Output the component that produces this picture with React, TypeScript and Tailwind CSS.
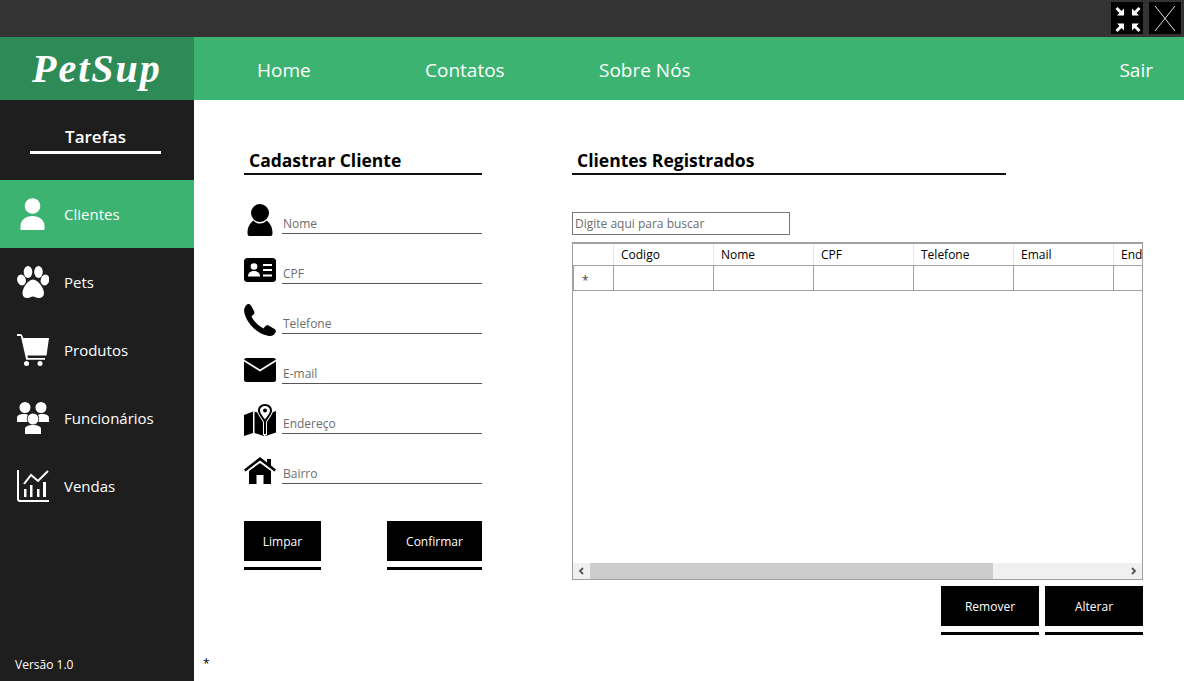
import React from 'react';

const font = { fontFamily: '"Open Sans", "Noto Sans", sans-serif' };

type IconProps = { className?: string };

const UserWhite = ({ className }: IconProps) => (
  <svg viewBox="0 0 32 32" className={className} fill="currentColor">
    <circle cx="15.5" cy="8" r="7.8" />
    <path d="M3.5 32V28C3.5 22 9 18 15.5 18S27.5 22 27.5 28V32Z" />
  </svg>
);

const PawIcon = ({ className }: IconProps) => (
  <svg viewBox="0 0 32 32" className={className} fill="currentColor">
    <ellipse cx="4.500" cy="14" rx="4.300" ry="5.500" transform="rotate(-15 4.500 14)" />
    <ellipse cx="11" cy="6" rx="4.300" ry="6" />
    <ellipse cx="21.500" cy="6" rx="4.300" ry="6" />
    <ellipse cx="28" cy="14" rx="4.300" ry="5.500" transform="rotate(15 28 14)" />
    <path d="M16 13.500C21 13.500 27 22 27 27C27 31 24 32 21.500 32C19 32 18 30.500 16 30.500C14 30.500 13 32 10.500 32C8 32 5.500 31 5.500 27C5.500 22 11 13.500 16 13.500Z" />
  </svg>
);

const CartIcon = ({ className }: IconProps) => (
  <svg viewBox="0 0 32 32" className={className} fill="currentColor">
    <path d="M0 0H3C4.500 0 5.400 1 5.700 2.400L6.200 4H32L29.500 21.500H10.500L10.800 24H28V25.800H9.200L3.800 2H0Z" />
    <circle cx="9.500" cy="29.500" r="2.500" />
    <circle cx="23" cy="29.500" r="2.500" />
  </svg>
);

const UsersIcon = ({ className }: IconProps) => (
  <svg viewBox="0 0 32 32" className={className} fill="currentColor">
    <circle cx="8" cy="5.500" r="5.500" />
    <circle cx="24" cy="5.500" r="5.500" />
    <circle cx="16" cy="17" r="5.500" />
    <path d="M0 20V16C0 13 3 12 7 12 9 12 10.500 12.500 11 13 9.500 15 9.500 18 10.500 20Z" />
    <path d="M32 20V16C32 13 29 12 25 12 23 12 21.500 12.500 21 13 22.500 15 22.500 18 21.500 20Z" />
    <path d="M8 32V27C8 24 12 23 16 23S24 24 24 27V32Z" />
  </svg>
);

const ChartIcon = ({ className }: IconProps) => (
  <svg viewBox="0 0 32 32" className={className}>
    <path d="M1 0V29C1 30.200 1.800 31 3 31H32" fill="none" stroke="currentColor" strokeWidth="2" />
    <path d="M7 14L14 5L21 11L31 1" fill="none" stroke="currentColor" strokeWidth="2" />
    <path d="M7 19H9.500V27H7ZM13 15H15.500V27H13ZM20 19H22.500V27H20ZM26 12H29V27H26Z" fill="currentColor" />
  </svg>
);

const UserBlack = ({ className }: IconProps) => (
  <svg viewBox="0 0 32 32" className={className} fill="currentColor">
    <circle cx="16" cy="9" r="9" />
    <path d="M3.500 29C3.500 23 6 19 9.500 16.500C12 20.500 20 20.500 22.500 16.500C26 19 28.500 23 28.500 29Q28.500 32 26.500 32H5.500Q3.500 32 3.500 29Z" />
  </svg>
);

const IdCardIcon = ({ className }: IconProps) => (
  <svg viewBox="0 0 32 24" className={className}>
    <rect width="32" height="24" rx="3.500" fill="#000" />
    <circle cx="10" cy="8.500" r="3.300" fill="#fff" />
    <path d="M4 18.500C4 14.500 7 13 10 13S16 14.500 16 18.500Z" fill="#fff" />
    <path d="M19 6H28V8H19ZM19 11H28V13H19ZM19 16.500H28V18.500H19Z" fill="#fff" />
  </svg>
);

const PhoneIcon = ({ className }: IconProps) => (
  <svg viewBox="0 0 32 32" className={className} fill="currentColor">
    <path d="M3 .5C4.500-.5 6 0 6.800 1.300L10 7C10.800 8.500 10.500 9.800 9.300 10.800L7.500 12.300C9.500 17 14 21.800 19.500 24.500L21 22.500C22 21.300 23.500 21 25 21.800L30.500 25C32 25.900 32.300 27.500 31.300 29C29.500 31.500 27 32.500 24 31.800C13 29.500 3.500 20 .5 9.500C-.5 5.500 .5 2.500 3 .5Z" />
  </svg>
);

const MailIcon = ({ className }: IconProps) => (
  <svg viewBox="0 0 32 24" className={className}>
    <rect width="32" height="24" rx="2.500" fill="#000" />
    <path d="M0 2.500L16 12.500L32 2.500" fill="none" stroke="#fff" strokeWidth="1.600" />
  </svg>
);

const MapIcon = ({ className }: IconProps) => (
  <svg viewBox="0 0 32 32" className={className}>
    <path d="M0 11L9 7.500V29L0 32ZM10.500 7.500L20 11V32L10.500 29ZM21.500 11L32 7V28.500L21.500 32Z" fill="#000" />
    <path d="M21 0C16.500 0 14 3.200 14 6.500C14 10 18 14 20 18V30H22V18C24 14 28 10 28 6.500C28 3.200 25.500 0 21 0Z" fill="#fff" stroke="#fff" strokeWidth="2" />
    <path fillRule="evenodd" d="M21 0C16.500 0 14 3.200 14 6.500C14 10 18 14 20 18V30H22V18C24 14 28 10 28 6.500C28 3.200 25.500 0 21 0ZM21 2C24 2 26 4.200 26 6.500C26 9 23 12.500 21 15.500C19 12.500 16 9 16 6.500C16 4.200 18 2 21 2Z" fill="#000" />
    <circle cx="21" cy="6.500" r="2" fill="#000" />
  </svg>
);

const HomeIcon = ({ className }: IconProps) => (
  <svg viewBox="0 0 32 27" className={className} fill="currentColor">
    <path d="M16 0L23 5.500V2H27V8.500L32 12.500L30.500 14.500L16 3.500L1.500 14.500L0 12.500Z" />
    <path d="M5 14L16 6L27 14V27H19.500V18H12.500V27H5Z" />
  </svg>
);

const CompressArrow = ({ sx, sy }: { sx: number; sy: number }) => (
  <g transform={`translate(17 17.500) scale(${sx} ${sy})`}>
    <path d="M-4 -4V-11L-11 -4Z" fill="#fff" />
    <path d="M-11.500 -11.500L-6 -6" stroke="#fff" strokeWidth="3" />
  </g>
);

const CompressIcon = ({ className }: IconProps) => (
  <svg viewBox="0 0 32 32" className={className}>
    <CompressArrow sx={1} sy={1} />
    <CompressArrow sx={-1} sy={1} />
    <CompressArrow sx={1} sy={-1} />
    <CompressArrow sx={-1} sy={-1} />
  </svg>
);

const sideItems = [
  { label: 'Clientes', icon: <UserWhite className="w-8 h-8" />, active: true },
  { label: 'Pets', icon: <PawIcon className="w-8 h-8" />, active: false },
  { label: 'Produtos', icon: <CartIcon className="w-8 h-8" />, active: false },
  { label: 'Funcionários', icon: <UsersIcon className="w-8 h-8" />, active: false },
  { label: 'Vendas', icon: <ChartIcon className="w-8 h-8" />, active: false },
];

const fields = [
  { label: 'Nome', icon: <UserBlack className="w-8 h-8 mb-[-2px]" /> },
  { label: 'CPF', icon: <IdCardIcon className="w-8 h-6 mb-[2px]" /> },
  { label: 'Telefone', icon: <PhoneIcon className="w-8 h-8 mb-[-2px]" /> },
  { label: 'E-mail', icon: <MailIcon className="w-8 h-6 mb-[2px]" /> },
  { label: 'Endereço', icon: <MapIcon className="w-8 h-8 mb-[-2px]" /> },
  { label: 'Bairro', icon: <HomeIcon className="w-8 h-[27px]" /> },
];

// ultima coluna aparece cortada no grid
const columns = ['Codigo', 'Nome', 'CPF', 'Telefone', 'Email', 'End'];

const ActionButton = ({ label, className }: { label: string; className: string }) => (
  <div className={className}>
    <button className="w-full h-10 bg-black text-white text-[12px] pt-px">{label}</button>
    <div className="h-[3px] bg-black mt-[6px]" />
  </div>
);

export default function App() {
  return (
    <div className="w-[1184px] h-[681px] overflow-hidden flex flex-col bg-white" style={font}>
      <div className="h-[37px] bg-[#333333] flex justify-end items-start pt-[2px] pr-[3px] gap-[6px]">
        <div className="w-8 h-8 bg-black">
          <CompressIcon className="w-8 h-8" />
        </div>
        <div className="w-8 h-8 bg-black">
          <svg viewBox="0 0 32 32" className="w-8 h-8">
            <path d="M6 4L26 29M26 4L6 29" stroke="#dddddd" strokeWidth="1" fill="none" />
          </svg>
        </div>
      </div>

      <div className="h-[63px] flex bg-[#3cb371] text-white">
        <div className="w-[194px] bg-[#2e8b57] flex items-center pl-[32px]">
          <span className="text-[40px] italic font-bold tracking-[2px] leading-none" style={{ fontFamily: '"Liberation Serif", serif' }}>PetSup</span>
        </div>
        <nav className="flex-1 relative flex items-center text-[19px] pt-[4px]">
          <span className="ml-[63px] w-[168px]">Home</span>
          <span className="w-[174px]">Contatos</span>
          <span>Sobre Nós</span>
          <span className="ml-auto mr-[31px]">Sair</span>
        </nav>
      </div>

      <div className="flex-1 flex min-h-0">
        <aside className="w-[194px] bg-[#1e1e1e] text-white flex flex-col">
          <div className="h-[80px] flex flex-col items-center pt-[25px] pr-[3px]">
            <span className="text-[17px] font-semibold leading-6">Tarefas</span>
            <div className="w-[131px] h-[3px] bg-white mt-[2px]" />
          </div>
          {sideItems.map((item) => (
            <div key={item.label} className={`h-[68px] flex items-center pl-[17px] gap-[15px] ${item.active ? 'bg-[#3cb371]' : ''}`}>
              {item.icon}
              <span className="text-[15px]">{item.label}</span>
            </div>
          ))}
          <div className="mt-auto pl-[15px] pb-[7px] text-[12px]">Versão 1.0</div>
        </aside>

        <main className="flex-1 relative flex items-start pl-[50px] pt-[47px] text-black">
          <section className="w-[238px]">
            <h2 className="pl-[5px] text-[17.5px] font-bold leading-6 border-b-2 border-[#111111] pt-[1px] pb-[1px]">Cadastrar Cliente</h2>
            <div className="flex flex-col gap-[34px] mt-[43px] mb-[37px]">
              {fields.map((f) => (
                <div key={f.label} className="h-4 flex items-end gap-[6px] relative">
                  <div className="w-8 flex shrink-0">{f.icon}</div>
                  <div className="flex-1 border-b border-[#555555] text-[12px] leading-[16px] pb-[1px] pl-[1px] text-[#6d6d6d]">{f.label}</div>
                </div>
              ))}
            </div>
            <div className="flex justify-between">
              <ActionButton label="Limpar" className="w-[77px]" />
              <ActionButton label="Confirmar" className="w-[95px]" />
            </div>
          </section>

          <section className="ml-[90px] w-[571px]">
            <h2 className="w-[434px] pl-[5px] text-[17.5px] font-bold leading-6 border-b-2 border-[#111111] pt-[1px] pb-[1px]">Clientes Registrados</h2>
            <div className="w-[218px] h-[23px] mt-[37px] border border-[#777777] pl-[2px] text-[12px] leading-[21px] text-[#6d6d6d]">Digite aqui para buscar</div>
            <div className="h-[338px] mt-[7px] border border-[#a0a0a0] border-t-2 flex flex-col justify-between overflow-hidden">
              <div className="text-[12px] leading-none">
                <div className="flex h-[22px] border-b border-[#a0a0a0]">
                  <div className="w-[41px] shrink-0 border-r border-[#e8e8e8]" />
                  {columns.map((c) => (
                    <div key={c} className="w-[100px] shrink-0 border-r border-[#e8e8e8] pl-[7px] pt-[5px] whitespace-nowrap overflow-hidden">{c}</div>
                  ))}
                </div>
                <div className="flex h-[25px] border-b border-[#a0a0a0]">
                  <div className="w-[41px] shrink-0 border-r border-l border-[#a0a0a0] pl-[8px] pt-[9px] text-[#444444]">*</div>
                  {columns.map((c) => (
                    <div key={c} className="w-[100px] shrink-0 border-r border-[#a0a0a0]" />
                  ))}
                </div>
              </div>
              <div className="h-4 bg-[#f0f0f0] flex items-center">
                <svg viewBox="0 0 17 16" className="w-[17px] h-4 shrink-0">
                  <path d="M10 5L7 8L10 11" fill="none" stroke="#555555" strokeWidth="1.800" />
                </svg>
                <div className="w-[403px] h-4 bg-[#cdcdcd]" />
                <svg viewBox="0 0 17 16" className="w-[17px] h-4 shrink-0 ml-auto">
                  <path d="M7 5L10 8L7 11" fill="none" stroke="#555555" strokeWidth="1.800" />
                </svg>
              </div>
            </div>
            <div className="flex justify-end gap-[6px] mt-[6px]">
              <ActionButton label="Remover" className="w-[98px]" />
              <ActionButton label="Alterar" className="w-[98px]" />
            </div>
          </section>

          <span className="absolute left-[9px] bottom-[9px] text-[12px] leading-4">*</span>
        </main>
      </div>
    </div>
  );
}
